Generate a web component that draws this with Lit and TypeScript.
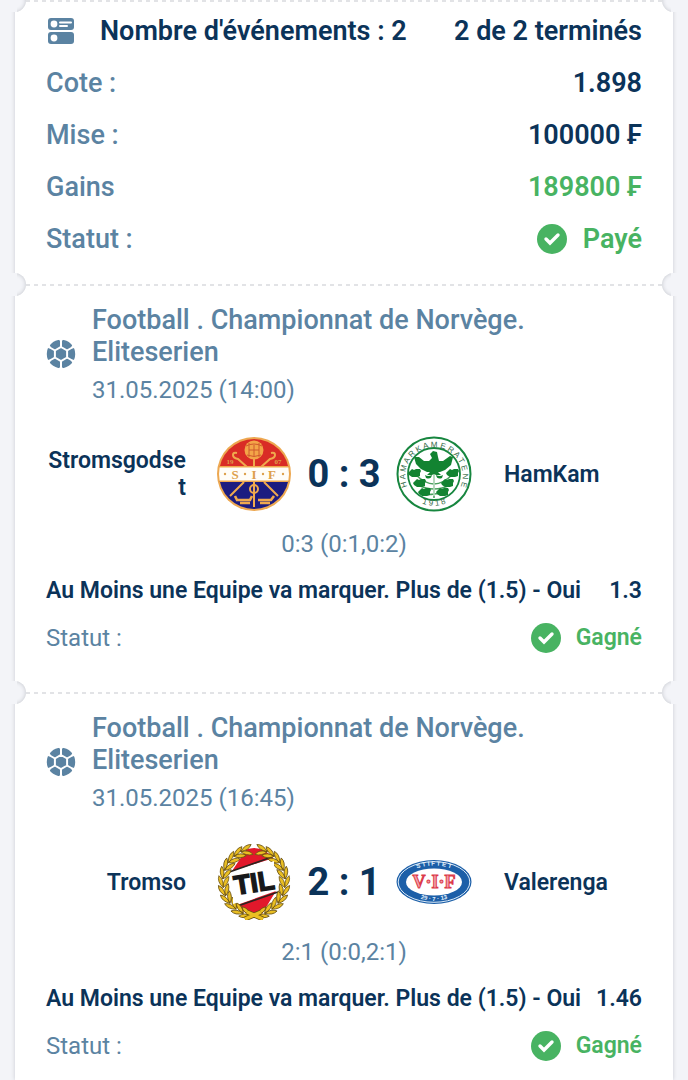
import { LitElement, html, svg, css, TemplateResult } from "lit";
import { customElement, property } from "lit/decorators.js";

interface Team {
  name: string;
  logo: TemplateResult;
}

interface Match {
  league: string;
  date: string;
  home: Team;
  away: Team;
  score: string;
  periods: string;
  market: string;
  odds: string;
  status: string;
}

const range = (n: number) => Array.from({ length: n }, (_, i) => i);

const stromsgodset = html`<svg viewBox="0 0 76 76" role="img" aria-label="Stromsgodset">
  <defs><clipPath id="sif"><circle cx="38" cy="38" r="35" /></clipPath></defs>
  <circle cx="38" cy="38" r="37" fill="#eda851" />
  <g clip-path="url(#sif)">
    <rect width="76" height="31" fill="#d92c26" />
    <rect y="45" width="76" height="31" fill="#1c1c80" />
    <g fill="none" stroke="#efa94e" stroke-width="2">
      <path d="M21 17q-4-1-4 2t5 4l9 8M55 17q4-1 4 2t-5 4l-9 8M38 23v48M28 46L14 60M48 46l14 14" />
      <path d="M20 64h14l2-4M19 60l2 4M42 64h13l3-4M24 67h10M44 67h10" stroke-width="2.6" />
      <circle cx="38" cy="53" r="4" />
    </g>
    <rect y="30" width="76" height="16" fill="#efa94e" />
    <rect y="31.500" width="76" height="13" fill="#fffdf8" />
  </g>
  <circle cx="38" cy="14" r="9.5" fill="#f3a548" />
  <path d="M30 10q8-4 16 0M33 14h10M31 19q7 3 14 0M33 7v14M38 9v11M43 7v14" fill="none" stroke="#cf5a2c" stroke-width="1" />
  <g font-family="Liberation Serif, serif" font-weight="700" fill="#dda04c" text-anchor="middle">
    <text x="19" y="42.5" font-size="13">S</text>
    <text x="38" y="42.5" font-size="13">I</text>
    <text x="56" y="42.5" font-size="13">F</text>
    <text x="14" y="28" font-size="7">19</text>
    <text x="62" y="28" font-size="7">07</text>
  </g>
  <g fill="#dda04c"><circle cx="9" cy="38" r="1.2" /><circle cx="29" cy="38" r="1.2" /><circle cx="47" cy="38" r="1.2" /><circle cx="67" cy="38" r="1.2" /></g>
</svg>`;

const rose = (x: number, y: number) => svg`<path transform="translate(${x} ${y})" d="M-5-2l2-2 2 1 2-1 4 0 1 2-1 2 0 3-3 1h-5l-3-2-1-2z" />`;

const hamkam = html`<svg viewBox="0 0 76 76" role="img" aria-label="HamKam">
  <defs>
    <path id="hk-top" d="M17.2 59.8A28.7 28.7 0 1 1 58.8 59.8" />
    <path id="hk-bottom" d="M14 59.5A33.5 33.5 0 0 0 62 59.5" />
  </defs>
  <circle cx="38" cy="38" r="36.5" fill="#fff" stroke="#17863f" stroke-width="2" />
  <circle cx="38" cy="38" r="26" fill="#fff" stroke="#17863f" stroke-width="1.8" />
  <g font-family="Liberation Sans, sans-serif" font-size="8" fill="#356b49">
    <text text-anchor="middle"><textPath href="#hk-top" startOffset="50%">H A M A R K A M E R A T E N E</textPath></text>
    <text text-anchor="middle"><textPath href="#hk-bottom" startOffset="50%">1 9 1 8</textPath></text>
  </g>
  <path d="M38 34v28M19 38q10 10 19 10t19-10M22 49q8 4 16 4t16-4M28 58q5 1 10 0t10 0" fill="none" stroke="#4ba05f" stroke-width="1.6" />
  <path d="M38 36v24" stroke="#fff" stroke-width="1" />
  <g fill="#128331">
    <path d="M34 18l3-3 4 1 1 5 1 4 4 0 7-5 3 1-2 8-6 5-5 2h-2l3 3h-5l-2-1-2 1h-5l3-3h-3l-6-3-5-5-2-7 5 0 5 4 5 0 3-3z" />
    <path d="M36 39q-1 5-6 3l-1-3q3 2 7 0zM40 39q1 5 6 3l1-3q-3 2-7 0z" />
    ${rose(19, 37)}${rose(57, 37)}${rose(24, 47)}${rose(52, 47)}${rose(29, 56)}${rose(47, 56)}
  </g>
</svg>`;

const leaf = (i: number, side: number) => {
  const angle = 14 + i * 15;
  const rad = (angle * Math.PI) / 180;
  const x = 38 + side * 31 * Math.sin(rad);
  const y = 38 + 33 * Math.cos(rad);
  return svg`<g transform="translate(${x.toFixed(1)} ${y.toFixed(1)}) rotate(${side > 0 ? -angle : angle}) scale(${side} 1)">
    <path d="M-5 0Q-1-6 6-6Q4 0-5 0zM-5 0Q1 6 7 4Q3-1-5 0z" />
  </g>`;
};

const tromso = html`<svg viewBox="0 0 76 76" role="img" aria-label="Tromso">
  <defs><clipPath id="til"><ellipse cx="38" cy="38" rx="27" ry="34" /></clipPath></defs>
  <ellipse cx="38" cy="38" rx="27" ry="34" fill="#fff" />
  <g clip-path="url(#til)">
    <path d="M16 27L32 3h13l13 11zM18 62l42-15-14 23H32z" fill="#e2182b" />
    <path d="M12 28.500l48-17M16 64l46-16" stroke="#2b2420" stroke-width="1.6" />
  </g>
  <g fill="#eabf22" stroke="#6b5212" stroke-width="0.8">${range(11).map((i) => svg`${leaf(i, 1)}${leaf(i, -1)}`)}</g>
  <path d="M29 75l16-7M47 75l-16-7" stroke="#6b5212" stroke-width="5" />
  <path d="M29 75l16-7M47 75l-16-7" stroke="#eabf22" stroke-width="3.4" />
  <path d="M17 31l41-14v30L17 60z" fill="#fff" />
  <text x="38" y="48" text-anchor="middle" transform="rotate(-9 38 38)" font-family="Liberation Sans, sans-serif" font-size="27" font-weight="700" fill="#17181a" stroke="#17181a" stroke-width="1.4">TIL</text>
</svg>`;

const valerenga = html`<svg viewBox="0 0 76 76" role="img" aria-label="Valerenga">
  <defs>
    <path id="vif-top" d="M9 37A29 15.5 0 0 1 67 37" />
    <path id="vif-bottom" d="M7 38A31 18.500 0 0 0 69 38" />
  </defs>
  <ellipse cx="38" cy="38" rx="37.5" ry="22" fill="#1c5fa8" />
  <ellipse cx="38" cy="38" rx="35.8" ry="20.3" fill="none" stroke="#dcebf8" stroke-width="1" />
  <ellipse cx="38" cy="38" rx="28" ry="13.5" fill="#fff" />
  <g font-family="Liberation Sans, sans-serif" font-weight="700" font-size="6" fill="#e4f1fc" text-anchor="middle">
    <text><textPath href="#vif-top" startOffset="50%">S T I F T E T</textPath></text>
    <text><textPath href="#vif-bottom" startOffset="50%">29 · 7 · 13</textPath></text>
  </g>
  <text x="38" y="44" text-anchor="middle" font-family="Liberation Serif, serif" font-size="18" font-weight="700" fill="#f3a3ab" stroke="#dc3a4a" stroke-width="1">V·I·F</text>
</svg>`;

const eventsIcon = html`<svg class="icon" viewBox="0 0 30 30" aria-hidden="true">
  <rect x="2" y="2" width="26" height="12" rx="3" fill="#5b83a2" />
  <rect x="2" y="16" width="26" height="12" rx="3" fill="#5b83a2" />
  <circle cx="8" cy="8" r="3.4" fill="#fff" />
  <circle cx="8" cy="22" r="3.4" fill="#fff" />
  <path d="M14 6.5h11M14 10h7" stroke="#fff" stroke-width="2" stroke-linecap="round" />
</svg>`;

const ballIcon = html`<svg class="icon" viewBox="0 0 30 30" aria-hidden="true">
  <circle cx="15" cy="15" r="14.2" fill="#5b83a2" />
  <g fill="none" stroke="#fff" stroke-width="2">
    <path d="M15 8l6.100 3.500v7L15 22l-6.100-3.500v-7z" />
    <path d="M15 0v8M15 22v8M2 7.500l7 4M28 7.500l-7 4M2 22.500l7-4M28 22.500l-7-4" />
  </g>
  <path d="M12.800 0h4.400L15 4zM12.800 30h4.400L15 26zM.9 8.900L3.100 5.100 5.500 9.500zM29.100 8.900L26.900 5.100 24.500 9.500zM.9 21.100l2.200 3.800 2.400-4.400zM29.100 21.100l-2.200 3.800-2.400-4.400z" fill="#fff" />
</svg>`;

const checkIcon = html`<svg class="check" viewBox="0 0 30 30" aria-hidden="true">
  <circle cx="15" cy="15" r="15" fill="#48b362" />
  <path d="M9 15l4 4 8-8" fill="none" stroke="#fff" stroke-width="3.4" stroke-linecap="round" />
</svg>`;

const shared = css`
  * { box-sizing: border-box; }
  .icon { width: 30px; height: 30px; display: block; }
  .check { width: 30px; height: 30px; display: block; }
  .won { display: flex; align-items: center; color: #48b362; font-weight: 600; }
`;

@customElement("ticket-divider")
class TicketDivider extends LitElement {
  static styles = css`
    :host { display: block; position: relative; height: 2px; }
    .line {
      height: 2px;
      margin: 0 11px;
      background: repeating-linear-gradient(90deg, #e2e3e6 0 4px, transparent 4px 8px);
    }
    .notch {
      position: absolute;
      top: -11px;
      width: 16px;
      height: 23px;
      overflow: hidden;
    }
    .notch::before {
      content: "";
      position: absolute;
      top: 0;
      width: 23px;
      height: 23px;
      border-radius: 50%;
      background: #f3f4f8;
      box-shadow: inset 0 0 4px #c3c5cb;
    }
    .start { left: -5px; }
    .start::before { right: 0; }
    .end { right: -5px; }
    .end::before { left: 0; }
    .notch::after {
      content: "";
      position: absolute;
      top: 0;
      width: 7px;
      height: 23px;
      background: #f3f4f8;
    }
    .start::after { left: 0; }
    .end::after { right: 0; }
  `;
  render() {
    return html`<div class="line"></div><span class="notch start"></span><span class="notch end"></span>`;
  }
}

@customElement("bet-event")
class BetEvent extends LitElement {
  @property({ attribute: false }) match!: Match;

  static styles = [
    shared,
    css`
      :host { display: block; padding: 18px 31px 39px; color: #0b3359; }
      .header { display: grid; grid-template-columns: 30px 1fr; align-items: center; column-gap: 16px; color: #5b83a2; }
      h2 { margin: 0 0 8px; font-size: 27px; line-height: 32px; font-weight: 500; max-width: 480px; }
      time { display: block; font-size: 24px; line-height: 28px; }
      .teams {
        display: grid;
        grid-template-columns: minmax(0, 1fr) 76px 104px 76px minmax(0, 1fr);
        align-items: center;
        margin-top: 32px;
      }
      .teams svg { display: block; width: 76px; height: 76px; }
      .name { font-size: 23px; line-height: 27px; font-weight: 600; overflow-wrap: anywhere; }
      .home { text-align: right; padding-right: 30px; }
      .away { padding-left: 32px; }
      .score { text-align: center; font-size: 38px; line-height: 44px; font-weight: 700; }
      .periods { margin: 18px 0 0; text-align: center; font-size: 24px; line-height: 28px; color: #5b83a2; }
      .row { display: flex; justify-content: space-between; align-items: center; font-size: 23px; line-height: 28px; }
      .market { margin-top: 19px; font-weight: 600; }
      .status { margin-top: 18px; line-height: 30px; color: #5b83a2; }
      .label { font-size: 24px; }
      .won { gap: 15px; }
    `,
  ];

  render() {
    const m = this.match;
    return html`
      <header class="header">
        ${ballIcon}
        <div><h2>${m.league}</h2><time>${m.date}</time></div>
      </header>
      <div class="teams">
        <span class="name home">${m.home.name}</span>
        ${m.home.logo}
        <strong class="score">${m.score}</strong>
        ${m.away.logo}
        <span class="name away">${m.away.name}</span>
      </div>
      <p class="periods">${m.periods}</p>
      <div class="row market"><span>${m.market}</span><span>${m.odds}</span></div>
      <div class="row status"><span class="label">Statut :</span><span class="won">${checkIcon}${m.status}</span></div>
    `;
  }
}

@customElement("app-root")
class AppRoot extends LitElement {
  private matches: Match[] = [
    {
      league: "Football . Championnat de Norvège. Eliteserien",
      date: "31.05.2025 (14:00)",
      home: { name: "Stromsgodset", logo: stromsgodset },
      away: { name: "HamKam", logo: hamkam },
      score: "0 : 3",
      periods: "0:3 (0:1,0:2)",
      market: "Au Moins une Equipe va marquer. Plus de (1.5) - Oui",
      odds: "1.3",
      status: "Gagné",
    },
    {
      league: "Football . Championnat de Norvège. Eliteserien",
      date: "31.05.2025 (16:45)",
      home: { name: "Tromso", logo: tromso },
      away: { name: "Valerenga", logo: valerenga },
      score: "2 : 1",
      periods: "2:1 (0:0,2:1)",
      market: "Au Moins une Equipe va marquer. Plus de (1.5) - Oui",
      odds: "1.46",
      status: "Gagné",
    },
  ];

  static styles = [
    shared,
    css`
      :host {
        display: flex;
        flex-direction: column;
        min-height: 100vh;
        overflow: hidden;
        padding: 0 15px;
        box-sizing: border-box;
        background: #f3f4f8;
        font-family: Roboto, "Noto Sans", sans-serif;
      }
      .card { flex: 1; background: #fff; box-shadow: 0 0 4px #c9cbd2; }
      .summary { margin: 0; padding: 3px 31px 19px; font-size: 27px; line-height: 52px; color: #5b83a2; }
      .line { display: flex; justify-content: space-between; align-items: center; height: 52px; }
      .count { display: flex; align-items: center; gap: 24px; }
      dt, dd { margin: 0; }
      dt { font-weight: 500; }
      dd, .count { font-weight: 600; color: #0b3359; }
      .gain, dd.won { color: #48b362; }
      .won { gap: 16px; }
      bet-event:last-child { padding-bottom: 16px; }
    `,
  ];

  render() {
    return html`
      <main class="card">
        <ticket-divider></ticket-divider>
        <dl class="summary">
          <div class="line"><dt class="count">${eventsIcon}Nombre d'événements : 2</dt><dd>2 de 2 terminés</dd></div>
          <div class="line"><dt>Cote :</dt><dd>1.898</dd></div>
          <div class="line"><dt>Mise :</dt><dd>100000 ₣</dd></div>
          <div class="line"><dt>Gains</dt><dd class="gain">189800 ₣</dd></div>
          <div class="line"><dt>Statut :</dt><dd class="won">${checkIcon}Payé</dd></div>
        </dl>
        ${this.matches.map((m) => html`<ticket-divider></ticket-divider><bet-event .match=${m}></bet-event>`)}
      </main>
    `;
  }
}
